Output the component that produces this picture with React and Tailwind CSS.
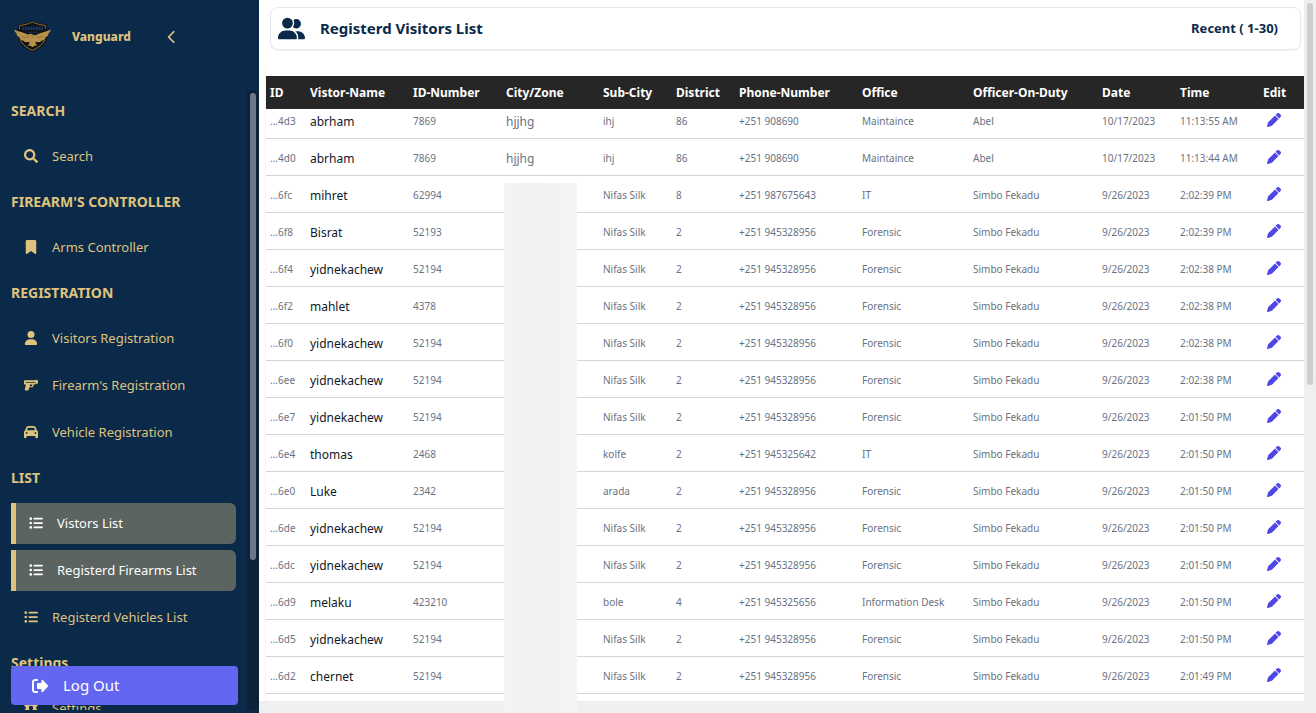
import React, { useEffect, useRef } from "react";
import {
  FaBookmark,
  FaUser,
  FaGun,
  FaCar,
  FaListUl,
  FaPen,
  FaUserGroup,
  FaChevronLeft,
  FaGear,
} from "react-icons/fa6";
import { FaSearch } from "react-icons/fa";

const MENU = [
  { title: "SEARCH", items: [{ label: "Search", icon: FaSearch }] },
  { title: "FIREARM'S CONTROLLER", items: [{ label: "Arms Controller", icon: FaBookmark }] },
  {
    title: "REGISTRATION",
    items: [
      { label: "Visitors Registration", icon: FaUser },
      { label: "Firearm's Registration", icon: FaGun },
      { label: "Vehicle Registration", icon: FaCar },
    ],
  },
  {
    title: "LIST",
    items: [
      { label: "Vistors List", icon: FaListUl, active: true },
      { label: "Registerd Firearms List", icon: FaListUl, active: true },
      { label: "Registerd Vehicles List", icon: FaListUl },
    ],
  },
  { title: "Settings", items: [{ label: "Settings", icon: FaGear }] },
];

const COLUMNS = [
  ["ID", "w-[40px]"],
  ["Vistor-Name", "w-[103px]"],
  ["ID-Number", "w-[93px]"],
  ["City/Zone", "w-[97px]"],
  ["Sub-City", "w-[73px]"],
  ["District", "w-[63px]"],
  ["Phone-Number", "w-[123px]"],
  ["Office", "w-[111px]"],
  ["Officer-On-Duty", "w-[129px]"],
  ["Date", "w-[78px]"],
  ["Time", "w-[83px]"],
  ["Edit", "w-[45px]"],
];

const P = "+251 945328956";
const S = "Simbo Fekadu";
const D = "9/26/2023";
const ROWS = [
  ["...4d3", "abrham", "7869", "hjjhg", "ihj", "86", "+251 908690", "Maintaince", "Abel", "10/17/2023", "11:13:55 AM"],
  ["...4d0", "abrham", "7869", "hjjhg", "ihj", "86", "+251 908690", "Maintaince", "Abel", "10/17/2023", "11:13:44 AM"],
  ["...6fc", "mihret", "62994", "", "Nifas Silk", "8", "+251 987675643", "IT", S, D, "2:02:39 PM"],
  ["...6f8", "Bisrat", "52193", "", "Nifas Silk", "2", P, "Forensic", S, D, "2:02:39 PM"],
  ["...6f4", "yidnekachew", "52194", "", "Nifas Silk", "2", P, "Forensic", S, D, "2:02:38 PM"],
  ["...6f2", "mahlet", "4378", "", "Nifas Silk", "2", P, "Forensic", S, D, "2:02:38 PM"],
  ["...6f0", "yidnekachew", "52194", "", "Nifas Silk", "2", P, "Forensic", S, D, "2:02:38 PM"],
  ["...6ee", "yidnekachew", "52194", "", "Nifas Silk", "2", P, "Forensic", S, D, "2:02:38 PM"],
  ["...6e7", "yidnekachew", "52194", "", "Nifas Silk", "2", P, "Forensic", S, D, "2:01:50 PM"],
  ["...6e4", "thomas", "2468", "", "kolfe", "2", "+251 945325642", "IT", S, D, "2:01:50 PM"],
  ["...6e0", "Luke", "2342", "", "arada", "2", P, "Forensic", S, D, "2:01:50 PM"],
  ["...6de", "yidnekachew", "52194", "", "Nifas Silk", "2", P, "Forensic", S, D, "2:01:50 PM"],
  ["...6dc", "yidnekachew", "52194", "", "Nifas Silk", "2", P, "Forensic", S, D, "2:01:50 PM"],
  ["...6d9", "melaku", "423210", "", "bole", "4", "+251 945325656", "Information Desk", S, D, "2:01:50 PM"],
  ["...6d5", "yidnekachew", "52194", "", "Nifas Silk", "2", P, "Forensic", S, D, "2:01:50 PM"],
  ["...6d2", "chernet", "52194", "", "Nifas Silk", "2", P, "Forensic", S, D, "2:01:49 PM"],
];

function Logo() {
  return (
    <svg viewBox="0 0 37 33" className="h-[33px] w-[37px] shrink-0" aria-hidden="true">
      <path d="M4.500 4C9 4 14 2.500 18.500.5 23 2.500 28 4 32.500 4l1.200 6-1 9c-1.500 6-7.500 10-14.200 13.200C11.800 29 5.800 25 4.300 19l-1-9z" fill="#101317" />
      <path d="M5.600 9V5.400C10 5.200 14.500 3.800 18.500 2c4 1.800 8.500 3.200 12.900 3.400V9" fill="none" stroke="#8f733b" strokeWidth="0.900" />
      <path d="M6.300 19.500c1.700 5 6.500 8.200 12.200 11 5.700-2.800 10.500-6 12.200-11" fill="none" stroke="#a58442" strokeWidth="0.900" />
      <path d="M8.500 8.300h20.500" stroke="#163b66" strokeWidth="3.200" strokeDasharray="1.900 0.800" />
      <path d="M14 12.600h9.500" stroke="#12304f" strokeWidth="1.800" strokeDasharray="1.200 0.500" />
      <path d="M0 9.500c4.500 2.200 10 2.900 14.200 5.200 1.200-.9 2.400-1.300 4.300-.2.900.4 2.200.9 3.400.6C26 12.800 32.500 11.700 37 9.500c-.8 2.300-1.800 3.600-3.400 4.700l1.100.1c-1 2-2.400 3-4 3.700l.9.400c-1.500 1.700-3.300 2.400-5 2.600l.6.600c-2 .9-3.900.7-5.600.2l.1 1.700 1.600 2.600-2.300-.5-2.500 1.700-2.500-1.700-2.300.5 1.600-2.600.1-1.700c-1.700.5-3.600.7-5.600-.2l.6-.6c-1.700-.2-3.500-.9-5-2.600l.9-.4c-1.600-.7-3-1.700-4-3.700l1.100-.1C1.800 13.100.8 11.800 0 9.500z" fill="#b8924a" />
      <path d="M15.500 15.500c1.700.1 3 .8 4 2M8 16.500c3 1 5 1 7 .5M29 16.500c-3 1-5 1-7 .5" fill="none" stroke="#80632f" strokeWidth="0.700" />
    </svg>
  );
}

function LogOutIcon() {
  return (
    <svg viewBox="0 0 512 512" className="size-4" fill="currentColor" aria-hidden="true">
      <path d="M96 480h64c17.700 0 32-14.300 32-32s-14.300-32-32-32H96c-17.700 0-32-14.300-32-32V128c0-17.700 14.300-32 32-32h64c17.700 0 32-14.300 32-32s-14.300-32-32-32H96C43 32 0 75 0 128v256c0 53 43 96 96 96zM504.800 234l-160-168c-8-7.500-19.200-9.400-28-5.600-8.800 3.800-14.500 12.500-14.500 22.100v77.500h-110c-17.700 0-32 14.300-32 32v128c0 17.700 14.300 32 32 32h110V429.500c0 9.600 5.700 18.200 14.500 22 8.800 3.800 20 2 28-5.600l160-168c9.600-12 9.600-31.800 0-43.900z" />
    </svg>
  );
}

function MenuItem({ label, icon: Icon, active }) {
  return (
    <a
      href="#"
      className={
        active
          ? "flex h-[41px] items-center gap-[14px] rounded-r-md border-l-[5px] border-[#dfc37d] bg-[#5b6461] pl-[13px] text-[13px] text-white"
          : "flex h-[41px] items-center gap-[14px] pl-[13px] text-[13px] text-[#dfc37d]"
      }
    >
      <Icon size={14} className="mb-[2px] shrink-0" />
      <span>{label}</span>
    </a>
  );
}

function Sidebar() {
  return (
    <aside className="relative flex w-[259px] shrink-0 flex-col bg-[#0b2a4a] pb-[3px] text-[#dfc37d]">
      <div className="flex h-[90px] shrink-0 items-start pt-5 pl-[14px]">
        <Logo />
        <h2 className="ml-[21px] w-[93px] text-[12px] leading-[34px] font-extrabold">Vanguard</h2>
        <button type="button" aria-label="Collapse menu" className="flex h-[33px] items-center">
          <FaChevronLeft size={14} />
        </button>
      </div>
      <div className="flex min-h-0 flex-1">
        <nav className="flex min-w-0 flex-1 flex-col gap-[15px] overflow-hidden px-[11px] pt-[11px]">
          {MENU.map((group) => (
            <section key={group.title} className="shrink-0">
              <h3 className="mb-[15px] text-[14px] leading-5 font-bold">{group.title}</h3>
              <div className="flex flex-col gap-[6px]">
                {group.items.map((item) => (
                  <MenuItem key={item.label} {...item} />
                ))}
              </div>
            </section>
          ))}
        </nav>
        <div className="w-3 shrink-0 bg-[#0d2239] px-[3px] py-[3px]">
          <div className="h-[76%] rounded-full bg-[#6d798a]" />
        </div>
      </div>
      <button
        type="button"
        className="absolute right-[21px] bottom-2 left-[11px] flex h-[39px] items-center gap-[15px] rounded bg-[#6366f1] pl-[21px] text-[15px] text-white"
      >
        <LogOutIcon />
        Log Out
      </button>
    </aside>
  );
}

function VisitorsTable() {
  const scroller = useRef(null);
  useEffect(() => {
    scroller.current.scrollTop = 7;
  }, []);
  return (
    <div ref={scroller} className="min-h-0 flex-1 overflow-hidden">
      <table className="w-full table-fixed border-separate border-spacing-0 text-left">
        <thead>
          <tr>
            {COLUMNS.map(([name, width]) => (
              <th key={name} className={`${width} sticky top-0 z-10 h-[33px] bg-[#262626] p-0 pl-1 text-[12px] font-bold whitespace-nowrap text-white`}>
                {name}
              </th>
            ))}
          </tr>
        </thead>
        <tbody>
          {ROWS.map((row) => (
            <tr key={row[0]}>
              {row.map((cell, i) => (
                <td
                  key={i}
                  className={
                    i === 1
                      ? "h-[37px] border-b border-gray-300 p-0 pt-[3px] pl-1 text-[12px] whitespace-nowrap text-gray-900"
                      : i === 3
                        ? "h-[37px] border-b border-gray-300 p-0 pt-[3px] pl-1 text-[12px] whitespace-nowrap text-gray-500"
                        : "h-[37px] border-b border-gray-300 p-0 pt-[3px] pl-1 text-[10px] whitespace-nowrap text-gray-500"
                  }
                >
                  {cell}
                </td>
              ))}
              <td className="h-[37px] border-b border-gray-300 p-0 pl-2 text-[#4f46e5]">
                <button type="button" aria-label={`Edit ${row[1]}`} className="block">
                  <FaPen size={14} />
                </button>
              </td>
            </tr>
          ))}
        </tbody>
      </table>
      <div className="h-5" />
    </div>
  );
}

export default function App() {
  return (
    <div className="flex h-screen overflow-hidden bg-white font-['Noto_Sans',sans-serif]">
      <Sidebar />
      <div className="relative flex min-w-0 flex-1">
        <main className="flex min-w-0 flex-1 flex-col">
          <header className="mt-[7px] mr-[3px] ml-[11px] flex h-[43px] shrink-0 items-center rounded-lg border border-gray-200 pr-[22px] pl-[7px] text-[#0b2a4a] shadow-xs">
            <FaUserGroup size={27} />
            <h1 className="ml-[15px] text-[15px] font-bold">Registerd Visitors List</h1>
            <span className="ml-auto text-[13px] font-bold">Recent ( 1-30)</span>
          </header>
          <div className="mt-[18px] ml-[6px] flex min-h-0 flex-1 flex-col border-l border-gray-100 pt-2">
            <VisitorsTable />
          </div>
          <div className="h-3 shrink-0 bg-[#efefef]" />
        </main>
        <div className="w-3 shrink-0 bg-[#efefef] px-[3px] py-[3px]">
          <div className="h-[54%] rounded-full bg-[#cdcdcd]" />
        </div>
        <div className="absolute top-[183px] bottom-px left-[245px] w-[73px] bg-linear-to-r from-[#f5f6f7] via-[#f0f1f3] via-25% to-[#f3f4f5]" />
      </div>
    </div>
  );
}
